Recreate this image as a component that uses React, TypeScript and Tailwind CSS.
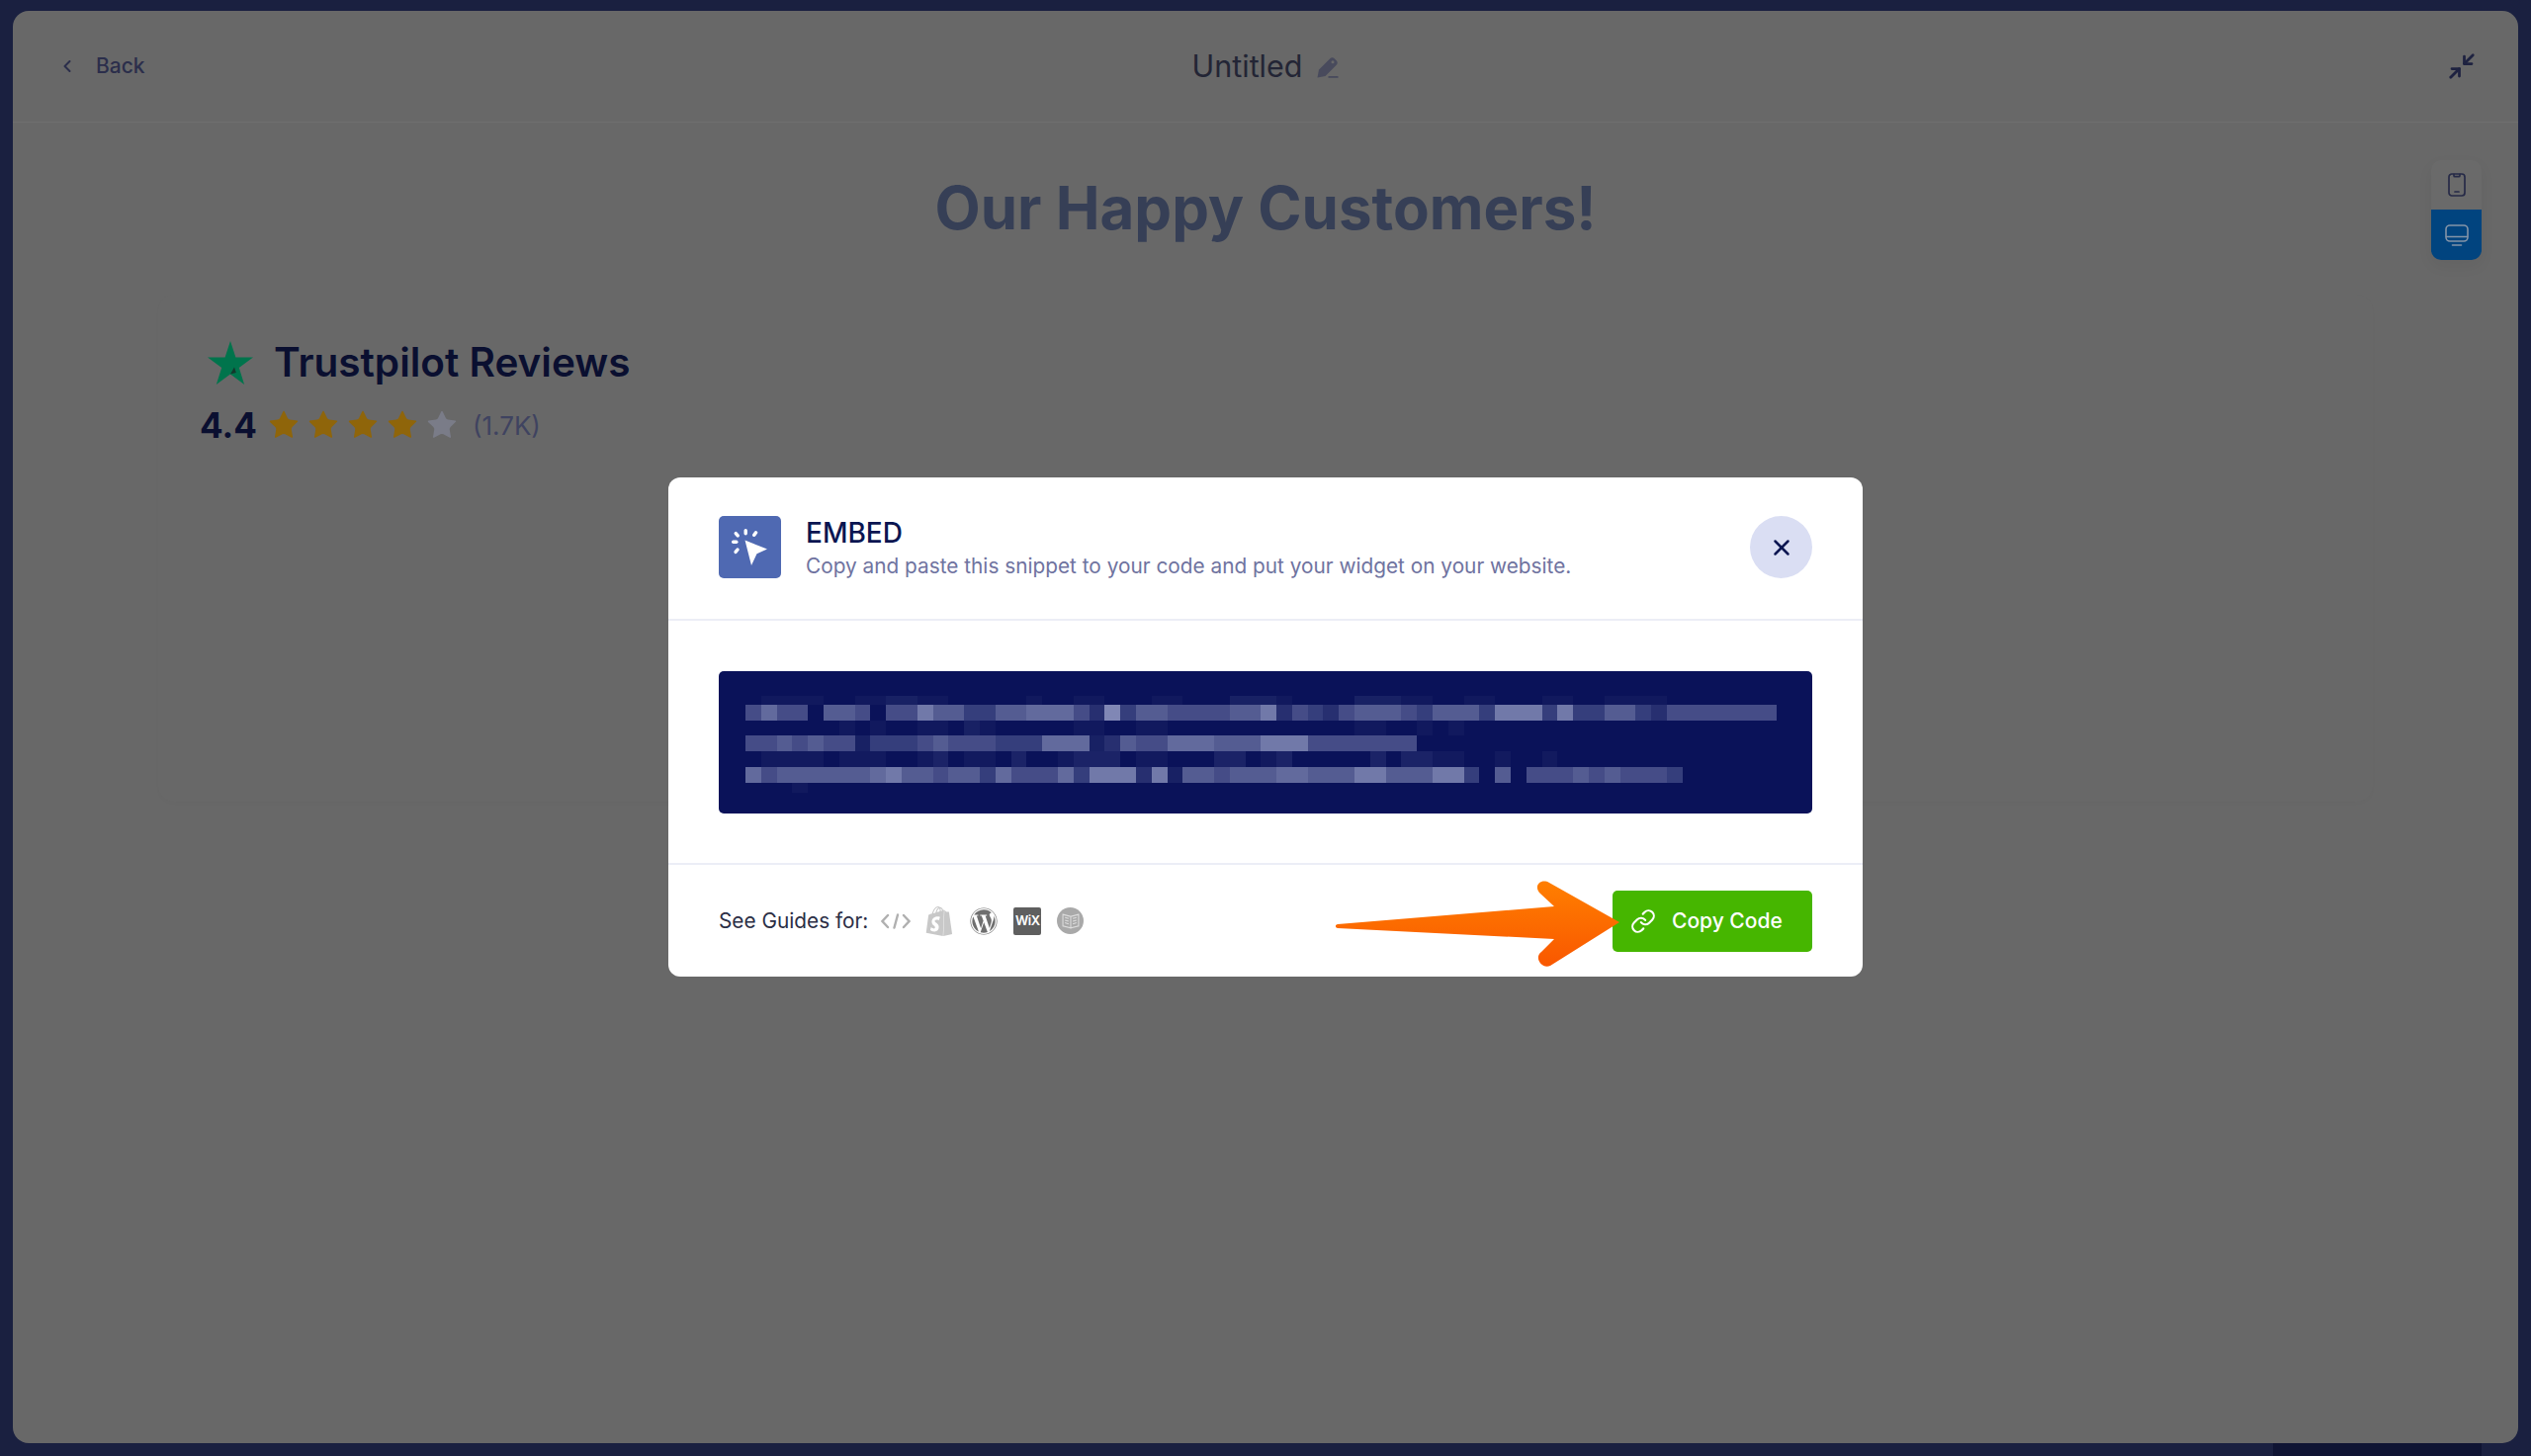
import { Link, Minimize2, X, ChevronLeft, Star } from "lucide-react";
import { FaWordpress } from "react-icons/fa";
import { SiShopify } from "react-icons/si";

const font = "font-['Inter','Noto_Sans',sans-serif]";

// digits = brightness of one 15.8px pixel of the blurred snippet
const snippetRows = [
  { h: "h-[9px]", dim: 0.5, cells: "011110011221100000100110001100022210000222110011000110011110000000" },
  { h: "h-[16px]", dim: 1, cells: "464405540447553355666428355444455724324555435553777373355324444444" },
  { h: "h-[15px]", dim: 0.5, cells: "000000101001102100000110011000000000000110010100000000000000000000" },
  { h: "h-[16px]", dim: 1, cells: "4454544133345444333666125446665557774444444" },
  { h: "h-[16px]", dim: 0.6, cells: "011110111001201102001222011000220120000020221100100100000000000000" },
  { h: "h-[16px]", dim: 1, cells: "645555556755455364446377727155455566555775557730504445454443" },
  { h: "h-[10px]", dim: 0.5, cells: "000100000000000000000000000000000000000000000000000000000000000000" },
];

function SnippetRow({ h, dim, cells }: { h: string; dim: number; cells: string }) {
  return (
    <div className={`flex ${h}`}>
      {cells.split("").map((c, i) => (
        <span
          key={i}
          className="w-[15.8px] h-full shrink-0 bg-[#9da5cc]"
          style={{ opacity: (Number(c) / 10) * dim }}
        />
      ))}
    </div>
  );
}

function PhoneIcon() {
  return (
    <svg width="18" height="24" viewBox="0 0 18 24" fill="none" stroke="#262a47" strokeWidth="1.7" strokeLinecap="round">
      <rect x="1" y="1" width="16" height="22" rx="3" />
      <path d="M6 1.500v1.200a1 1 0 0 0 1 1h4a1 1 0 0 0 1-1V1.500" />
      <path d="M7 19h4" />
    </svg>
  );
}

function DesktopIcon() {
  return (
    <svg width="24" height="22" viewBox="0 0 24 22" fill="none" stroke="#8494a8" strokeWidth="1.6" strokeLinecap="round">
      <rect x="1" y="1" width="22" height="16" rx="4" />
      <path d="M1.500 12.500h21" />
      <path d="M7.500 21h9" />
    </svg>
  );
}

function PencilIcon() {
  return (
    <svg width="22" height="22" viewBox="0 0 22 22" className="mt-[2px]">
      <path d="M0.500 21.500L2 13.500 13 2.500a3.500 3.500 0 0 1 5 0l1.500 1.500a3.500 3.500 0 0 1 0 5L8.500 20z" fill="#484a5c" />
      <circle cx="16" cy="5.800" r="1.500" fill="#686868" />
      <rect x="11.500" y="20" width="10" height="1.800" fill="#484a5c" />
    </svg>
  );
}

function TrustStar() {
  return (
    <svg width="46" height="44" viewBox="0 0 46 44">
      <path d="M23 0l5.400 16.600H46L31.800 27l5.300 17L23 33.500 8.800 44l5.400-17L0 16.600h17.600z" fill="#00744c" />
      <path d="M27 26.500l1.800 5.500-5.800 1.500z" fill="#13382c" />
    </svg>
  );
}

function CursorIcon() {
  return (
    <svg width="38" height="38" viewBox="0 0 38 38" fill="#fff">
      <path d="M13.500 11.500L36 20.500l-10.500 4.800L20 37z" />
      <rect x="12.500" y="0" width="3.400" height="6.500" rx="1.700" />
      <rect x="22" y="1.800" width="3.400" height="6.500" rx="1.700" transform="rotate(35 23.700 5)" />
      <rect x="3.500" y="2.500" width="3.400" height="6.500" rx="1.700" transform="rotate(-40 5.200 5.700)" />
      <rect x="0" y="11.500" width="6.500" height="3.400" rx="1.700" />
      <rect x="3.500" y="19" width="3.400" height="6.500" rx="1.700" transform="rotate(40 5.200 22)" />
    </svg>
  );
}

function BookBadge() {
  return (
    <div className="w-[27px] h-[27px] rounded-full bg-[#a9a9a9] flex items-center justify-center">
      <svg width="18" height="16" viewBox="0 0 17 15" fill="none" stroke="#dedede" strokeWidth="1">
        <path d="M1 1l7.500 2v11L1 12zM16 1L8.500 3v11l7.500-2z" />
        <path d="M3 4l3.500 1M3 6.500l3.500 1M3 9l3.500 1M14 4l-3.500 1M14 6.500l-3.500 1M14 9l-3.500 1" />
      </svg>
    </div>
  );
}

function GuideIcons() {
  return (
    <div className="flex items-center gap-[16px] ml-[13px]">
      <svg width="30" height="16" viewBox="0 0 30 16" fill="none" stroke="#b0b0b0" strokeWidth="2.400" strokeLinecap="round">
        <path d="M7 2L1.500 8 7 14M23 2l5.500 6L23 14M17 1.500l-3.500 13" />
      </svg>
      <SiShopify className="w-[30px] h-[30px] -mx-[2px] text-[#c8c8c8]" />
      <FaWordpress className="w-[28px] h-[28px] text-[#6f6f6f] ml-[2px]" />
      <div className={`w-[28px] h-[28px] rounded-[2px] bg-[#5f5f5f] flex items-center justify-center text-white text-[13px] tracking-[-0.5px] font-semibold ${font}`}>
        WiX
      </div>
      <BookBadge />
    </div>
  );
}

function EmbedModal() {
  return (
    <div className="absolute inset-0 flex items-center justify-center">
      <div className="relative w-[1208px] h-[505px] bg-white rounded-[12px] flex flex-col">
        <div className="h-[145px] flex items-center px-[51px] pb-[2px] border-b-2 border-[#eceef6]">
          <div className="w-[63px] h-[63px] rounded-[5px] bg-[#4f69b2] flex items-center justify-center">
            <CursorIcon />
          </div>
          <div className="ml-[25px] flex-1 pt-[2px]">
            <div className="text-[28px] leading-[34px] font-medium text-[#0a1551]">EMBED</div>
            <div className="text-[20.800px] leading-[30px] text-[#6f739f] mt-[2px]">
              Copy and paste this snippet to your code and put your widget on your website.
            </div>
          </div>
          <button className="w-[63px] h-[63px] rounded-full bg-[#dadef3] flex items-center justify-center text-[#0a1551]">
            <X size={26} strokeWidth={2.3} />
          </button>
        </div>

        <div className="h-[247px] px-[51px] pt-[51px] border-b-2 border-[#eceef6]">
          <div className="h-[144px] rounded-[5px] bg-[#0a1259] pt-[25px] pl-[27px] overflow-hidden">
            {snippetRows.map((r, i) => (
              <SnippetRow key={i} h={r.h} dim={r.dim} cells={r.cells} />
            ))}
          </div>
        </div>

        <div className="flex-1 flex items-center justify-between px-[51px]">
          <div className="flex items-center">
            <span className="text-[20.800px] text-[#2b2e45]">See Guides for:</span>
            <GuideIcons />
          </div>
          <button className="w-[202px] h-[62px] rounded-[5px] bg-[#46b600] flex items-center pl-[18px] text-white text-[21px] font-medium">
            <Link size={26} strokeWidth={2} />
            <span className="ml-[16px]">Copy Code</span>
          </button>
        </div>

        {/* annotation arrow */}
        <svg className="absolute left-[675px] top-[408px]" width="289" height="88" viewBox="0 0 289 88">
          <defs>
            <linearGradient id="arrowFill" x1="0" y1="0" x2="0" y2="1">
              <stop offset="0" stopColor="#ff7f00" />
              <stop offset="1" stopColor="#f95700" />
            </linearGradient>
          </defs>
          <path
            d="M2 44 L221 26 L207 13 C199 5 208 -3 216 2 L287 42 L217 86 C209 90 200 78 208 72 L221 59 L2 48 C-1 47.500 -1 44.500 2 44 Z"
            fill="url(#arrowFill)"
          />
        </svg>
      </div>
    </div>
  );
}

export default function App() {
  return (
    <div className={`relative w-[2560px] h-[1473px] overflow-hidden bg-[#1a2040] flex flex-col ${font}`}>
      <div className="flex-1 min-h-0 pt-[11px] px-[13px]">
        <div className="relative h-full rounded-[16px] bg-[#686868] flex flex-col">
          <header className="h-[113px] shrink-0 flex items-center pl-[45px] pr-[42px] border-b border-[#6f6f6f]">
            <div className="flex-1 flex items-center gap-[19px] text-[#2b2e4b] text-[21px] font-medium">
              <ChevronLeft size={20} strokeWidth={2.4} />
              <span>Back</span>
            </div>
            <div className="flex items-center gap-[15px] text-[30.500px] text-[#232535] -ml-[3px]">
              <span>Untitled</span>
              <PencilIcon />
            </div>
            <div className="flex-1 flex justify-end">
              <Minimize2 size={30} strokeWidth={2.2} className="text-[#1e2240]" />
            </div>
          </header>

          <h1 className="mt-[48px] text-center text-[60px] leading-[76px] font-bold text-[#363f56]">
            Our Happy Customers!
          </h1>

          <section className="mx-[147px] mt-[50px] h-[513px] shrink-0 rounded-[16px] bg-[#686868] shadow-[0_2px_4px_rgba(0,0,0,0.015)] pt-[44px] pl-[42px]">
            <div className="flex items-center gap-[21px] ml-[8px]">
              <TrustStar />
              <span className="text-[40.500px] leading-[50px] font-semibold text-[#0a0f30]">Trustpilot Reviews</span>
            </div>
            <div className="flex items-center mt-[18px]">
              <span className="text-[35px] leading-[40px] font-bold text-[#0a0f30] w-[68px]">4.4</span>
              {[0, 1, 2, 3, 4].map((i) => (
                <Star
                  key={i}
                  size={34}
                  strokeWidth={0}
                  className={`mr-[6px] ${i < 4 ? "fill-[#8f650a]" : "fill-[#7a7c88]"}`}
                />
              ))}
              <span className="ml-[8px] text-[26px] text-[#3f4360]">(1.7K)</span>
            </div>
          </section>

          {/* device switch floats over the preview */}
          <div className="absolute left-[2446px] top-[151px] w-[51px] rounded-[10px] overflow-hidden bg-[#6a6a6a] shadow-[0_6px_16px_rgba(0,0,0,0.05)] flex flex-col">
            <div className="h-[50px] flex items-center justify-center">
              <PhoneIcon />
            </div>
            <div className="h-[51px] bg-[#01447f] flex items-center justify-center">
              <DesktopIcon />
            </div>
          </div>

          <EmbedModal />
        </div>
      </div>
      <div className="h-[13px] shrink-0">
        <div className="ml-[2299px] w-[211px] h-full bg-[#0f1433]" />
      </div>
    </div>
  );
}
